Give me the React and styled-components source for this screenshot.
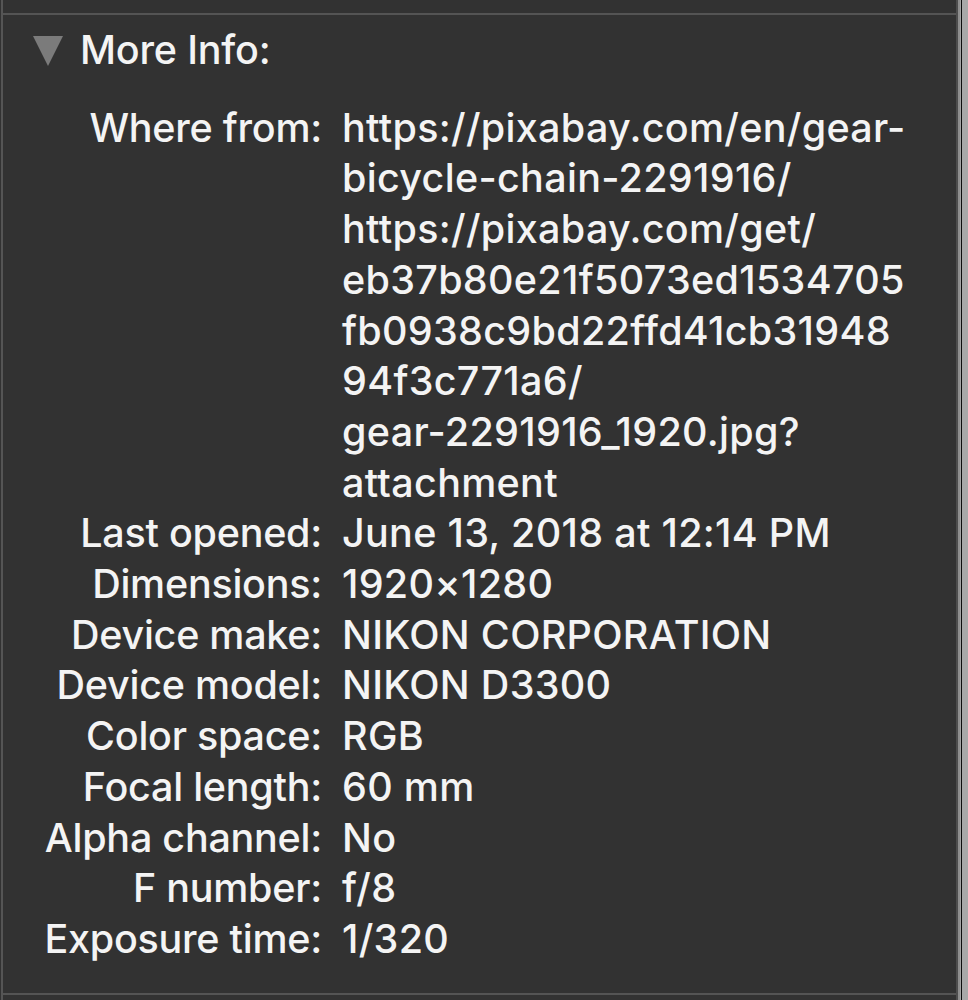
import React from 'react';
import styled, { createGlobalStyle } from 'styled-components';

const GlobalStyle = createGlobalStyle`
  html, body {
    margin: 0;
    padding: 0;
    background: #323232;
  }
  body {
    font-family: Inter, "Liberation Sans", sans-serif;
    -webkit-font-smoothing: antialiased;
  }
`;

const Window = styled.div`
  display: flex;
  width: 968px;
  height: 1000px;
  box-sizing: border-box;
  padding-left: 1px;
  background: #323232;
`;

const Pane = styled.div`
  flex: 1;
  display: flex;
  flex-direction: column;
  border-left: 2px solid #555555;
  border-right: 2px solid #4d4d4d;
`;

const TopRule = styled.div`
  margin-top: 13px;
  height: 2px;
  background: #545454;
`;

const BottomRule = styled.div`
  margin-top: auto;
  margin-bottom: 5px;
  height: 2px;
  background: #545454;
`;

const ScrollEdge = styled.div`
  width: 10px;
  display: flex;
`;

const EdgeLine = styled.div`
  width: ${({ w }) => w}px;
  background: ${({ c }) => c};
`;

const Section = styled.section`
  padding: 10px 0 0 30px;
  color: #f4f4f4;
  font-size: 39.5px;
  font-weight: 500;
  line-height: 50.7px;
`;

const Disclosure = styled.div`
  display: flex;
  align-items: center;
  gap: 17px;
`;

const Triangle = styled.span`
  width: 0;
  height: 0;
  border-left: 15.5px solid transparent;
  border-right: 15.5px solid transparent;
  border-top: 30px solid #7b7b7b;
  margin-top: 1px;
`;

const Title = styled.span`
  letter-spacing: -0.2px;
`;

const InfoGrid = styled.dl`
  display: grid;
  grid-template-columns: 289px 1fr;
  column-gap: 20px;
  margin: 27px 0 0;
`;

const Label = styled.dt`
  text-align: right;
  white-space: nowrap;
  letter-spacing: -0.25px;
`;

const Value = styled.dd`
  margin: 0;
  white-space: nowrap;
  letter-spacing: 0.3px;
`;

const Line = styled.span`
  display: block;
`;

const rows = [
  ['Where from:', [
    'https://pixabay.com/en/gear-',
    'bicycle-chain-2291916/',
    'https://pixabay.com/get/',
    'eb37b80e21f5073ed1534705',
    'fb0938c9bd22ffd41cb31948',
    '94f3c771a6/',
    'gear-2291916_1920.jpg?',
    'attachment',
  ]],
  ['Last opened:', ['June 13, 2018 at 12:14 PM']],
  ['Dimensions:', ['1920×1280']],
  ['Device make:', ['NIKON CORPORATION']],
  ['Device model:', ['NIKON D3300']],
  ['Color space:', ['RGB']],
  ['Focal length:', ['60 mm']],
  ['Alpha channel:', ['No']],
  ['F number:', ['f/8']],
  ['Exposure time:', ['1/320']],
];

const App = () => (
  <>
    <GlobalStyle />
    <Window>
      <Pane>
        <TopRule />
        <Section>
          <Disclosure>
            <Triangle />
            <Title>More Info:</Title>
          </Disclosure>
          <InfoGrid>
            {rows.map(([label, lines]) => (
              <React.Fragment key={label}>
                <Label>{label}</Label>
                <Value>
                  {lines.map((l) => <Line key={l}>{l}</Line>)}
                </Value>
              </React.Fragment>
            ))}
          </InfoGrid>
        </Section>
        <BottomRule />
      </Pane>
      <ScrollEdge>
        <EdgeLine w={2} c="#8e8e8e" />
        <EdgeLine w={1} c="#a4a4a4" />
        <EdgeLine w={1} c="#0c0c0c" />
        <EdgeLine w={6} c="#a8a8a8" />
      </ScrollEdge>
    </Window>
  </>
);

export default App;
